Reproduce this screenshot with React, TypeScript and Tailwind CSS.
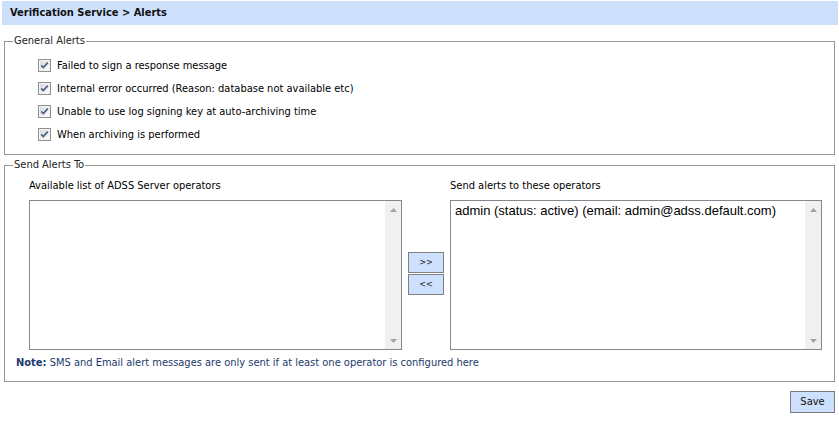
import React from "react";

const alerts = [
  "Failed to sign a response message",
  "Internal error occurred (Reason: database not available etc)",
  "Unable to use log signing key at auto-archiving time",
  "When archiving is performed",
];

function CheckBox() {
  return (
    <svg width="13" height="13" viewBox="0 0 13 13" className="shrink-0">
      <defs>
        <linearGradient id="cbg" x1="0" y1="0" x2="1" y2="1">
          <stop offset="0" stopColor="#dcdcdc" />
          <stop offset="1" stopColor="#fbfbfb" />
        </linearGradient>
      </defs>
      <rect x="0.5" y="0.5" width="12" height="12" fill="#f4f4f4" stroke="#8f8f8f" />
      <rect x="2" y="2" width="9" height="9" fill="url(#cbg)" />
      <path d="M3.2 6.4 L5.3 8.6 L9.8 3.6" fill="none" stroke="#4a5f8a" strokeWidth="1.7" />
    </svg>
  );
}

function ScrollBar() {
  return (
    <div className="flex w-[16px] shrink-0 flex-col justify-between bg-[#f0f0f0]">
      <div className="flex h-[17px] items-center justify-center">
        <svg width="7" height="4" viewBox="0 0 7 4">
          <path d="M0 4 L3.5 0 L7 4 Z" fill="#a3a3a3" />
        </svg>
      </div>
      <div className="flex h-[17px] items-center justify-center">
        <svg width="7" height="4" viewBox="0 0 7 4">
          <path d="M0 0 L3.5 4 L7 0 Z" fill="#a3a3a3" />
        </svg>
      </div>
    </div>
  );
}

function ListBox({ items, width }: { items: string[]; width: string }) {
  return (
    <div className={`flex h-[150px] ${width} border border-[#828790] bg-white`}>
      <div className="flex-1 px-[4px] pt-[2px] font-['Liberation_Sans',Arial,sans-serif] text-[13px] leading-[16px] text-black">
        {items.map((item) => (
          <div key={item}>{item}</div>
        ))}
      </div>
      <ScrollBar />
    </div>
  );
}

function MoveButton({ label }: { label: string }) {
  return (
    <button className="flex h-[21px] w-[36px] items-center justify-center border border-[#7f8080] bg-[#cde0fd] text-[9px] leading-none text-[#1a1a1a]">
      {label}
    </button>
  );
}

export default function App() {
  return (
    <div className="h-[428px] w-[839px] bg-white pt-[1px] font-['DejaVu_Sans_Condensed','Liberation_Sans',Arial,sans-serif] text-[11px] leading-[14px] text-black">
      {/* Page title */}
      <div className="ml-[2px] mr-[1px] flex h-[24px] items-center bg-[#cde0fb] pl-[8px] text-[11px] font-bold text-[#111]">
        Verification Service &gt; Alerts
      </div>

      {/* General Alerts */}
      <fieldset className="mx-[4px] mt-[9px] border border-[#959595] pb-[8px] pl-[33px]">
        <legend className="-ml-[25px] px-[1px] text-[#222]">General Alerts</legend>
        <div className="pt-[6px]">
          {alerts.map((text) => (
            <div key={text} className="flex h-[23px] items-center gap-[6px]">
              <CheckBox />
              <span>{text}</span>
            </div>
          ))}
        </div>
      </fieldset>

      {/* Send Alerts To */}
      <fieldset className="mx-[4px] mt-[3px] border border-[#959595] pb-[11px] pl-[11px]">
        <legend className="-ml-[3px] px-[1px] text-[#222]">Send Alerts To</legend>
        <div className="flex pl-[13px] pt-[7px]">
          <div className="flex flex-col gap-[7px]">
            <div>Available list of ADSS Server operators</div>
            <ListBox items={[]} width="w-[373px]" />
          </div>
          <div className="mx-[6px] flex flex-col justify-center gap-[1px] pt-[18px]">
            <MoveButton label="&gt;&gt;" />
            <MoveButton label="&lt;&lt;" />
          </div>
          <div className="flex flex-col gap-[7px]">
            <div>Send alerts to these operators</div>
            <ListBox
              items={["admin (status: active) (email: admin@adss.default.com)"]}
              width="w-[372px]"
            />
          </div>
        </div>
        <div className="mt-[6px] text-[#1b3a6b]">
          <span className="font-bold">Note:</span> SMS and Email alert messages are only sent if at least one operator is configured here
        </div>
      </fieldset>

      <div className="mr-[4px] mt-[9px] flex justify-end">
        <button className="h-[22px] w-[45px] border border-[#7a7a7a] bg-[#cde0fd] text-[11px] text-[#111]">
          Save
        </button>
      </div>
    </div>
  );
}
